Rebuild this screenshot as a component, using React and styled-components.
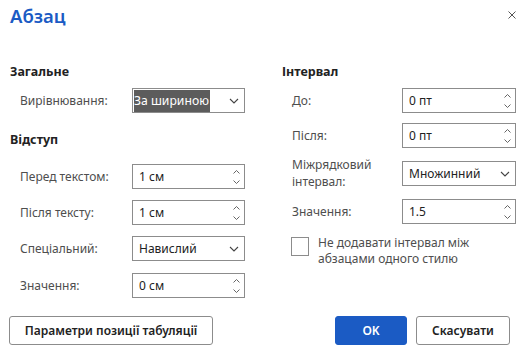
import styled, { createGlobalStyle } from "styled-components";

const GlobalStyle = createGlobalStyle`
  html, body {
    margin: 0;
    padding: 0;
    background: #ffffff;
  }
  body {
    font-family: "Noto Sans", "Open Sans", sans-serif;
    color: #222;
  }
`;

const Chevron = ({ up }) => (
  <svg width="7" height="4" viewBox="0 0 7 4">
    <path
      d={up ? "M0.5 3.5 L3.5 0.5 L6.5 3.5" : "M0.5 0.5 L3.5 3.5 L6.5 0.5"}
      fill="none"
      stroke="#555"
      strokeWidth="0.9"
    />
  </svg>
);

const DropArrow = () => (
  <svg width="10" height="6" viewBox="0 0 10 6">
    <path d="M1 1 L5 5 L9 1" fill="none" stroke="#444" strokeWidth="1.1" />
  </svg>
);

function Spin({ value }) {
  return (
    <Field>
      <Value>{value}</Value>
      <SpinBox>
        <Chevron up />
        <Chevron />
      </SpinBox>
    </Field>
  );
}

function Select({ value, selected }) {
  return (
    <Field>
      {selected ? <Selected>{value}</Selected> : <Value>{value}</Value>}
      <DropBox>
        <DropArrow />
      </DropBox>
    </Field>
  );
}

export default function App() {
  return (
    <>
      <GlobalStyle />
      <Dialog>
        <Header>
          <Title>Абзац</Title>
          <Close aria-label="Закрити">
            <svg width="8" height="8" viewBox="0 0 8 8">
              <path d="M0.5 0.5 L7.5 7.5 M7.5 0.5 L0.5 7.5" stroke="#555" strokeWidth="1" />
            </svg>
          </Close>
        </Header>

        <Columns>
          <Column>
            <Heading>Загальне</Heading>
            <Row $mt={6}>
              <Label>Вирівнювання:</Label>
              <Select value="За шириною" selected />
            </Row>

            <Heading $mt={17}>Відступ</Heading>
            <Row $mt={14}>
              <Label>Перед текстом:</Label>
              <Spin value="1 см" />
            </Row>
            <Row $mt={11}>
              <Label>Після тексту:</Label>
              <Spin value="1 см" />
            </Row>
            <Row $mt={11}>
              <Label>Спеціальний:</Label>
              <Select value="Навислий" />
            </Row>
            <Row $mt={12}>
              <Label>Значення:</Label>
              <Spin value="0 см" />
            </Row>
          </Column>

          <Column>
            <Heading>Інтервал</Heading>
            <Row $mt={6} $right>
              <Label>До:</Label>
              <Spin value="0 пт" />
            </Row>
            <Row $mt={10} $right>
              <Label>Після:</Label>
              <Spin value="0 пт" />
            </Row>
            <Row $mt={8} $right>
              <Label $wrap>Міжрядковий інтервал:</Label>
              <Select value="Множинний" />
            </Row>
            <Row $mt={9} $right>
              <Label>Значення:</Label>
              <Spin value="1.5" />
            </Row>
            <CheckRow>
              <Box />
              <CheckText>Не додавати інтервал між абзацами одного стилю</CheckText>
            </CheckRow>
          </Column>
        </Columns>

        <Footer>
          <Button $w={204}>Параметри позиції табуляції</Button>
          <Actions>
            <Button $primary $w={72}>OK</Button>
            <Button $w={94}>Скасувати</Button>
          </Actions>
        </Footer>
      </Dialog>
    </>
  );
}

const Dialog = styled.div`
  width: 530px;
  height: 352px;
  box-sizing: border-box;
  padding: 2px 14px 0 10px;
  display: flex;
  flex-direction: column;
  overflow: hidden;
`;

const Header = styled.div`
  display: flex;
  justify-content: space-between;
  align-items: flex-start;
  height: 28px;
`;

const Title = styled.h1`
  margin: 0;
  font-size: 18.5px;
  line-height: 28px;
  font-weight: 600;
  color: #1b5bc4;
`;

const Close = styled.button`
  border: none;
  background: none;
  padding: 0;
  margin: 9px 0 0 0;
  width: 8px;
  height: 8px;
  display: flex;
`;

const Columns = styled.div`
  display: grid;
  grid-template-columns: 236px 234px;
  column-gap: 36px;
  margin-top: 32px;
`;

const Column = styled.div`
  display: flex;
  flex-direction: column;
`;

const Heading = styled.h2`
  margin: ${(p) => p.$mt || 0}px 0 0 0;
  font-size: 12.5px;
  line-height: 20px;
  font-weight: 700;
  color: #222;
`;

const Row = styled.div`
  display: grid;
  grid-template-columns: ${(p) => (p.$right ? "110px 114px" : "112px 113px")};
  align-items: center;
  padding-left: 10px;
  margin-top: ${(p) => p.$mt || 0}px;
`;

const Label = styled.div`
  font-size: 12px;
  line-height: 17px;
  color: #4e4e4e;
  white-space: ${(p) => (p.$wrap ? "normal" : "nowrap")};
  padding-right: ${(p) => (p.$wrap ? "20px" : "0")};
`;

const Field = styled.div`
  height: 25px;
  box-sizing: border-box;
  border: 1px solid #8c8c8c;
  display: flex;
  align-items: center;
  padding-left: 6px;
  background: #fff;
`;

const Value = styled.span`
  flex: 1;
  font-size: 12px;
  color: #222;
`;

const Selected = styled.span`
  margin-left: -5px;
  padding: 2px 1px 2px 0;
  font-size: 12.2px;
  line-height: 18px;
  background: #5c5c5c;
  color: #fff;
  margin-right: auto;
`;

const SpinBox = styled.div`
  width: 16px;
  height: 100%;
  display: flex;
  flex-direction: column;
  justify-content: center;
  align-items: center;
  gap: 6px;
`;

const DropBox = styled.div`
  width: 20px;
  display: flex;
  justify-content: center;
  align-items: center;
  padding-top: 1px;
`;

const CheckRow = styled.div`
  display: flex;
  align-items: flex-start;
  gap: 9px;
  margin-top: 11px;
  padding-left: 9px;
`;

const Box = styled.div`
  width: 18px;
  height: 19px;
  box-sizing: border-box;
  border: 1px solid #8c8c8c;
  margin-top: 2px;
  flex: none;
`;

const CheckText = styled.div`
  font-size: 12px;
  line-height: 16px;
  color: #4e4e4e;
  width: 190px;
`;

const Footer = styled.div`
  display: flex;
  justify-content: space-between;
  align-items: center;
  margin-top: auto;
  margin-bottom: 7px;
  margin-left: -1px;
  padding-right: 6px;
`;

const Actions = styled.div`
  display: flex;
  gap: 9px;
`;

const Button = styled.button`
  width: ${(p) => p.$w}px;
  height: 29px;
  box-sizing: border-box;
  border-radius: 3px;
  border: 1px solid ${(p) => (p.$primary ? "#1b5bc4" : "#8c8c8c")};
  background: ${(p) => (p.$primary ? "#1b5bc4" : "#fff")};
  color: ${(p) => (p.$primary ? "#fff" : "#222")};
  font-family: "Noto Sans", "Open Sans", sans-serif;
  font-size: 12px;
  font-weight: 600;
  padding: 0;
`;
